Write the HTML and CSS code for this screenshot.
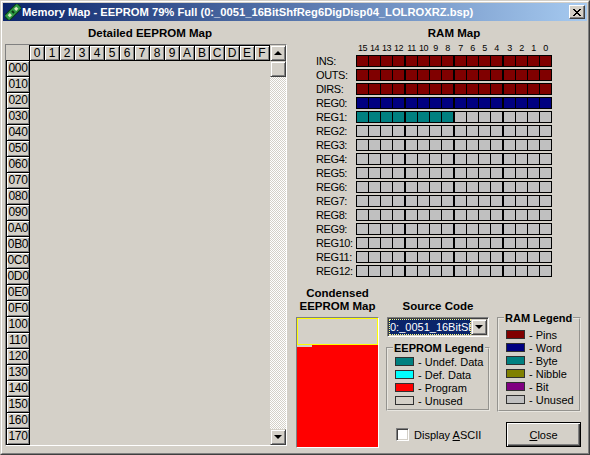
FILE: index.html
```html
<!DOCTYPE html>
<html lang="en">
<head>
    <meta charset="UTF-8">
    <title>Memory Map</title>
    <link rel="stylesheet" href="styles.css">
</head>
<body>
<div class="window">
  <div class="window-inner">
    <!-- Title bar -->
    <div class="titlebar">
      <svg class="title-icon" width="16" height="16" viewBox="0 0 16 16">
        <g transform="rotate(-45 8 8)">
          <rect x="-1" y="4.5" width="18" height="7" fill="#2f9a45" stroke="#0b3a14"/>
          <rect x="2" y="6.5" width="3" height="3" fill="#d8e8c0"/>
          <rect x="7" y="6.5" width="2" height="3" fill="#0b3a14"/>
          <rect x="11" y="6.5" width="3" height="3" fill="#d8e8c0"/>
        </g>
      </svg>
      <span class="title-text">Memory Map - EEPROM 79% Full (0:_0051_16BitShfReg6DigDisp04_LOLROXRZ.bsp)</span>
      <div class="title-close">
        <svg width="8" height="7" viewBox="0 0 8 7"><path d="M0 0 L7 7 M1 0 L8 7 M7 0 L0 7 M8 0 L1 7" stroke="#000" stroke-width="1"/></svg>
      </div>
    </div>

    <div class="client">
      <!-- Detailed EEPROM map -->
      <section class="eeprom-panel">
        <h2 class="eeprom-title">Detailed EEPROM Map</h2>
        <div class="eeprom-frame">
          <div class="eeprom-table">
            <div class="hex-header">
              <div class="corner"></div>
              <div class="hex-cell">0</div><div class="hex-cell">1</div><div class="hex-cell">2</div><div class="hex-cell">3</div>
              <div class="hex-cell">4</div><div class="hex-cell">5</div><div class="hex-cell">6</div><div class="hex-cell">7</div>
              <div class="hex-cell">8</div><div class="hex-cell">9</div><div class="hex-cell">A</div><div class="hex-cell">B</div>
              <div class="hex-cell">C</div><div class="hex-cell">D</div><div class="hex-cell">E</div><div class="hex-cell">F</div>
            </div>
            <div class="eeprom-body">
              <div class="row-labels">
                <div class="addr">000</div><div class="addr">010</div><div class="addr">020</div><div class="addr">030</div>
                <div class="addr">040</div><div class="addr">050</div><div class="addr">060</div><div class="addr">070</div>
                <div class="addr">080</div><div class="addr">090</div><div class="addr">0A0</div><div class="addr">0B0</div>
                <div class="addr">0C0</div><div class="addr">0D0</div><div class="addr">0E0</div><div class="addr">0F0</div>
                <div class="addr">100</div><div class="addr">110</div><div class="addr">120</div><div class="addr">130</div>
                <div class="addr">140</div><div class="addr">150</div><div class="addr">160</div><div class="addr">170</div>
              </div>
              <div class="eeprom-data"></div>
            </div>
          </div>
          <div class="scrollbar">
            <div class="sb-btn"><span class="arrow-up"></span></div>
            <div class="sb-thumb"></div>
            <div class="sb-track"></div>
            <div class="sb-btn"><span class="arrow-down"></span></div>
          </div>
        </div>
      </section>

      <section class="right-panel">
        <!-- RAM map -->
        <div class="ram-map">
          <h2 class="ram-title">RAM Map</h2>
          <div class="bit-labels">
            <div class="label-group"><span>15</span><span>14</span><span>13</span><span>12</span></div>
            <div class="label-group"><span>11</span><span>10</span><span>9</span><span>8</span></div>
            <div class="label-group"><span>7</span><span>6</span><span>5</span><span>4</span></div>
            <div class="label-group"><span>3</span><span>2</span><span>1</span><span>0</span></div>
          </div>
          <div class="ram-row"><span class="reg-name">INS:</span><div class="ram-bits"><div class="bit-group pins"></div><div class="bit-group pins"></div><div class="bit-group pins"></div><div class="bit-group pins"></div></div></div>
          <div class="ram-row"><span class="reg-name">OUTS:</span><div class="ram-bits"><div class="bit-group pins"></div><div class="bit-group pins"></div><div class="bit-group pins"></div><div class="bit-group pins"></div></div></div>
          <div class="ram-row"><span class="reg-name">DIRS:</span><div class="ram-bits"><div class="bit-group pins"></div><div class="bit-group pins"></div><div class="bit-group pins"></div><div class="bit-group pins"></div></div></div>
          <div class="ram-row"><span class="reg-name">REG0:</span><div class="ram-bits"><div class="bit-group word"></div><div class="bit-group word"></div><div class="bit-group word"></div><div class="bit-group word"></div></div></div>
          <div class="ram-row"><span class="reg-name">REG1:</span><div class="ram-bits"><div class="bit-group byte"></div><div class="bit-group byte"></div><div class="bit-group"></div><div class="bit-group"></div></div></div>
          <div class="ram-row"><span class="reg-name">REG2:</span><div class="ram-bits"><div class="bit-group"></div><div class="bit-group"></div><div class="bit-group"></div><div class="bit-group"></div></div></div>
          <div class="ram-row"><span class="reg-name">REG3:</span><div class="ram-bits"><div class="bit-group"></div><div class="bit-group"></div><div class="bit-group"></div><div class="bit-group"></div></div></div>
          <div class="ram-row"><span class="reg-name">REG4:</span><div class="ram-bits"><div class="bit-group"></div><div class="bit-group"></div><div class="bit-group"></div><div class="bit-group"></div></div></div>
          <div class="ram-row"><span class="reg-name">REG5:</span><div class="ram-bits"><div class="bit-group"></div><div class="bit-group"></div><div class="bit-group"></div><div class="bit-group"></div></div></div>
          <div class="ram-row"><span class="reg-name">REG6:</span><div class="ram-bits"><div class="bit-group"></div><div class="bit-group"></div><div class="bit-group"></div><div class="bit-group"></div></div></div>
          <div class="ram-row"><span class="reg-name">REG7:</span><div class="ram-bits"><div class="bit-group"></div><div class="bit-group"></div><div class="bit-group"></div><div class="bit-group"></div></div></div>
          <div class="ram-row"><span class="reg-name">REG8:</span><div class="ram-bits"><div class="bit-group"></div><div class="bit-group"></div><div class="bit-group"></div><div class="bit-group"></div></div></div>
          <div class="ram-row"><span class="reg-name">REG9:</span><div class="ram-bits"><div class="bit-group"></div><div class="bit-group"></div><div class="bit-group"></div><div class="bit-group"></div></div></div>
          <div class="ram-row"><span class="reg-name">REG10:</span><div class="ram-bits"><div class="bit-group"></div><div class="bit-group"></div><div class="bit-group"></div><div class="bit-group"></div></div></div>
          <div class="ram-row"><span class="reg-name">REG11:</span><div class="ram-bits"><div class="bit-group"></div><div class="bit-group"></div><div class="bit-group"></div><div class="bit-group"></div></div></div>
          <div class="ram-row"><span class="reg-name">REG12:</span><div class="ram-bits"><div class="bit-group"></div><div class="bit-group"></div><div class="bit-group"></div><div class="bit-group"></div></div></div>
        </div>

        <!-- Bottom controls -->
        <div class="bottom-area">
          <div class="condensed">
            <h3 class="small-title">Condensed<br>EEPROM Map</h3>
            <div class="condensed-box">
              <div class="condensed-view"></div>
              <div class="condensed-notch"></div>
            </div>
          </div>

          <div class="controls">
            <div class="controls-top">
              <div class="source-col">
                <h3 class="small-title source-title">Source Code</h3>
                <div class="combo">
                  <div class="combo-text">0:_0051_16BitShfReg6DigDisp04_LOLROXRZ.bsp</div>
                  <div class="combo-btn"><span class="arrow-down"></span></div>
                </div>
                <div class="groupbox eeprom-legend">
                  <div class="groupbox-title">EEPROM Legend</div>
                  <div class="legend-item"><span class="swatch undef"></span>- Undef. Data</div>
                  <div class="legend-item"><span class="swatch def"></span>- Def. Data</div>
                  <div class="legend-item"><span class="swatch program"></span>- Program</div>
                  <div class="legend-item"><span class="swatch empty"></span>- Unused</div>
                </div>
              </div>
              <div class="groupbox ram-legend">
                <div class="groupbox-title">RAM Legend</div>
                <div class="legend-item"><span class="swatch pins"></span>- Pins</div>
                <div class="legend-item"><span class="swatch word"></span>- Word</div>
                <div class="legend-item"><span class="swatch byte"></span>- Byte</div>
                <div class="legend-item"><span class="swatch nibble"></span>- Nibble</div>
                <div class="legend-item"><span class="swatch bit"></span>- Bit</div>
                <div class="legend-item"><span class="swatch ram-unused"></span>- Unused</div>
              </div>
            </div>
            <div class="controls-bottom">
              <label class="check">
                <span class="checkbox"></span>
                <span>Display <u>A</u>SCII</span>
              </label>
              <button class="btn"><u>C</u>lose</button>
            </div>
          </div>
        </div>
      </section>
    </div>
  </div>
</div>
</body>
</html>
```

FILE: styles.css
```css
:root {
    --face: #d4d0c8;
    --shadow: #808080;
    --dark: #404040;
    --light: #ffffff;
    --pins: #800000;
    --word: #000080;
    --byte: #008080;
    --nibble: #808000;
    --bit: #800080;
    --unused: #c0c0c0;
}

* {
    margin: 0;
    padding: 0;
    box-sizing: border-box;
}

body {
    background: var(--face);
    font-family: "Liberation Sans", Arial, sans-serif;
    font-size: 11px;
    color: #000;
}

/* Window frame */
.window {
    width: 590px;
    height: 455px;
    background: var(--face);
    border: 1px solid;
    border-color: var(--face) var(--dark) var(--dark) var(--face);
}

.window-inner {
    height: 100%;
    border: 1px solid;
    border-color: var(--light) var(--shadow) var(--shadow) var(--light);
    padding: 1px;
}

.titlebar {
    height: 18px;
    display: flex;
    align-items: center;
    padding: 0 2px 0 2px;
    background: linear-gradient(to right, #0a246a, #a6caf0);
    color: #fff;
    font-weight: bold;
    font-size: 11.2px;
}

.title-icon {
    flex: none;
}

.title-text {
    margin-left: 1px;
    white-space: nowrap;
}

.title-close {
    margin-left: auto;
    width: 16px;
    height: 14px;
    display: flex;
    align-items: center;
    justify-content: center;
    background: var(--face);
    border: 1px solid;
    border-color: var(--light) var(--dark) var(--dark) var(--light);
    box-shadow: inset -1px -1px var(--shadow);
}

.client {
    display: flex;
    padding: 4px 0 0 2px;
}

/* Detailed EEPROM map */
.eeprom-panel {
    width: 282px;
}

h2 {
    font-size: 11.5px;
    font-weight: bold;
    line-height: 16px;
    text-align: center;
}

.eeprom-title {
    padding-left: 8px;
}

.eeprom-frame {
    margin-top: 3px;
    display: flex;
    border: 1px solid;
    border-color: var(--shadow) var(--light) var(--light) var(--shadow);
}

.eeprom-table {
    width: 264px;
    display: flex;
    flex-direction: column;
}

.hex-header {
    display: flex;
    height: 16px;
}

.corner {
    width: 24px;
    border-right: 1px solid #000;
    border-bottom: 1px solid #000;
}

.hex-cell {
    width: 15px;
    border-top: 1px solid #000;
    border-right: 1px solid #000;
    border-bottom: 1px solid #000;
    box-shadow: inset 1px 1px var(--light), inset -1px -1px var(--shadow);
    text-align: center;
    font-size: 12px;
    line-height: 14px;
}

.eeprom-body {
    display: flex;
    height: 384px;
}

.row-labels {
    width: 24px;
}

.addr {
    height: 16px;
    border-left: 1px solid #000;
    border-right: 1px solid #000;
    border-bottom: 1px solid #000;
    box-shadow: inset 1px 1px var(--light), inset -1px -1px var(--shadow);
    text-align: center;
    font-size: 12px;
    line-height: 15px;
    letter-spacing: -0.3px;
}

.eeprom-data {
    flex: 1;
}

.scrollbar {
    width: 16px;
    display: flex;
    flex-direction: column;
}

.sb-btn,
.sb-thumb {
    height: 16px;
    flex: none;
    display: flex;
    align-items: center;
    justify-content: center;
    background: var(--face);
    border: 1px solid;
    border-color: var(--face) var(--dark) var(--dark) var(--face);
    box-shadow: inset 1px 1px var(--light), inset -1px -1px var(--shadow);
}

.sb-track {
    flex: 1;
    background: repeating-conic-gradient(var(--face) 0 25%, var(--light) 0 50%) 0 0 / 2px 2px;
}

.arrow-up,
.arrow-down {
    width: 0;
    height: 0;
    border-left: 4px solid transparent;
    border-right: 4px solid transparent;
}

.arrow-up {
    border-bottom: 4px solid #000;
}

.arrow-down {
    border-top: 4px solid #000;
}

/* RAM map */
.right-panel {
    margin-left: 9px;
    width: 286px;
}

.ram-map {
    padding-left: 20px;
}

.ram-title {
    margin-left: 40px;
    width: 196px;
}

.bit-labels {
    display: flex;
    gap: 2px;
    height: 14px;
    margin-left: 41px;
    font-size: 9px;
    line-height: 10px;
    padding-top: 2px;
}

.label-group {
    display: flex;
    width: 47px;
    gap: 1px;
}

.label-group span {
    width: 11px;
    text-align: center;
    letter-spacing: -0.5px;
}

.ram-row {
    display: flex;
    height: 12px;
    margin-bottom: 2px;
}

.reg-name {
    width: 40px;
    line-height: 12px;
    letter-spacing: -0.4px;
    white-space: nowrap;
}

.ram-bits {
    display: flex;
    gap: 2px;
    width: 196px;
    background: #000;
    border: 1px solid #000;
}

.bit-group {
    --cell: var(--unused);
    width: 47px;
    background: repeating-linear-gradient(90deg, var(--cell) 0 11px, #000 11px 12px);
}

.bit-group.pins { --cell: var(--pins); }
.bit-group.word { --cell: var(--word); }
.bit-group.byte { --cell: var(--byte); }

/* Bottom area */
.bottom-area {
    display: flex;
    margin-top: 10px;
}

.small-title {
    font-size: 11.5px;
    font-weight: bold;
    line-height: 13px;
    text-align: center;
}

.condensed {
    width: 83px;
}

.condensed-box {
    margin-top: 4px;
    height: 131px;
    background: #ff0000;
    border: 1px solid;
    border-color: var(--shadow) var(--light) var(--light) var(--shadow);
}

.condensed-view {
    height: 27px;
    background: var(--face);
    border: 1px solid #ffff00;
}

.condensed-notch {
    width: 15px;
    height: 2px;
    background: var(--face);
}

.controls {
    margin-left: 7px;
    width: 195px;
}

.controls-top {
    display: flex;
    height: 127px;
}

.source-col {
    width: 104px;
}

.source-title {
    padding-top: 13px;
}

.combo {
    margin: 4px 1px 0;
    height: 20px;
    display: flex;
    padding: 1px;
    background: #fff;
    border: 1px solid;
    border-color: var(--shadow) var(--light) var(--light) var(--shadow);
    box-shadow: inset 1px 1px var(--dark), inset -1px -1px var(--face);
}

.combo-text {
    flex: 1;
    overflow: hidden;
    white-space: nowrap;
    background: #0a246a;
    color: #fff;
    line-height: 16px;
    padding-left: 1px;
    outline: 1px dotted #ffff80;
    outline-offset: -1px;
}

.combo-btn {
    width: 16px;
    display: flex;
    align-items: center;
    justify-content: center;
    background: var(--face);
    border: 1px solid;
    border-color: var(--face) var(--dark) var(--dark) var(--face);
    box-shadow: inset 1px 1px var(--light), inset -1px -1px var(--shadow);
}

/* Group boxes: title sits on the etched top line */
.groupbox {
    border: 2px groove #e8e6e0;
    padding-left: 7px;
}

.groupbox-title {
    width: fit-content;
    margin: -7px 0 0 -2px;
    padding: 0 1px;
    background: var(--face);
    font-size: 11px;
    font-weight: bold;
    line-height: 12px;
    white-space: nowrap;
}

.eeprom-legend {
    margin-top: 10px;
    height: 64px;
}

.eeprom-legend .groupbox-title {
    margin-bottom: 1px;
}

.ram-legend {
    margin: 30px 0 0 7px;
    width: 84px;
    height: 95px;
}

.ram-legend .groupbox-title {
    margin-bottom: 4px;
}

.legend-item {
    display: flex;
    align-items: center;
    gap: 4px;
    height: 13px;
    white-space: nowrap;
}

.swatch {
    width: 19px;
    height: 9px;
    border: 1px solid #303030;
}

.swatch.undef { background: #008080; }
.swatch.def { background: #00ffff; }
.swatch.program { background: #ff0000; }
.swatch.empty { background: var(--face); }
.swatch.pins { background: var(--pins); }
.swatch.word { background: var(--word); }
.swatch.byte { background: var(--byte); }
.swatch.nibble { background: var(--nibble); }
.swatch.bit { background: var(--bit); }
.swatch.ram-unused { background: var(--unused); }

.controls-bottom {
    display: flex;
    align-items: center;
    margin-top: 8px;
}

.check {
    display: flex;
    align-items: center;
    gap: 5px;
    padding-left: 10px;
}

.checkbox {
    width: 13px;
    height: 13px;
    background: #fff;
    border: 1px solid;
    border-color: var(--shadow) var(--light) var(--light) var(--shadow);
    box-shadow: inset 1px 1px var(--dark), inset -1px -1px var(--face);
}

.btn {
    margin-left: auto;
    width: 75px;
    height: 25px;
    background: var(--face);
    border: 1px solid #000;
    box-shadow: inset 1px 1px var(--light), inset -1px -1px var(--dark), inset -2px -2px var(--shadow);
    font-family: inherit;
    font-size: 11px;
    color: #000;
}
```
